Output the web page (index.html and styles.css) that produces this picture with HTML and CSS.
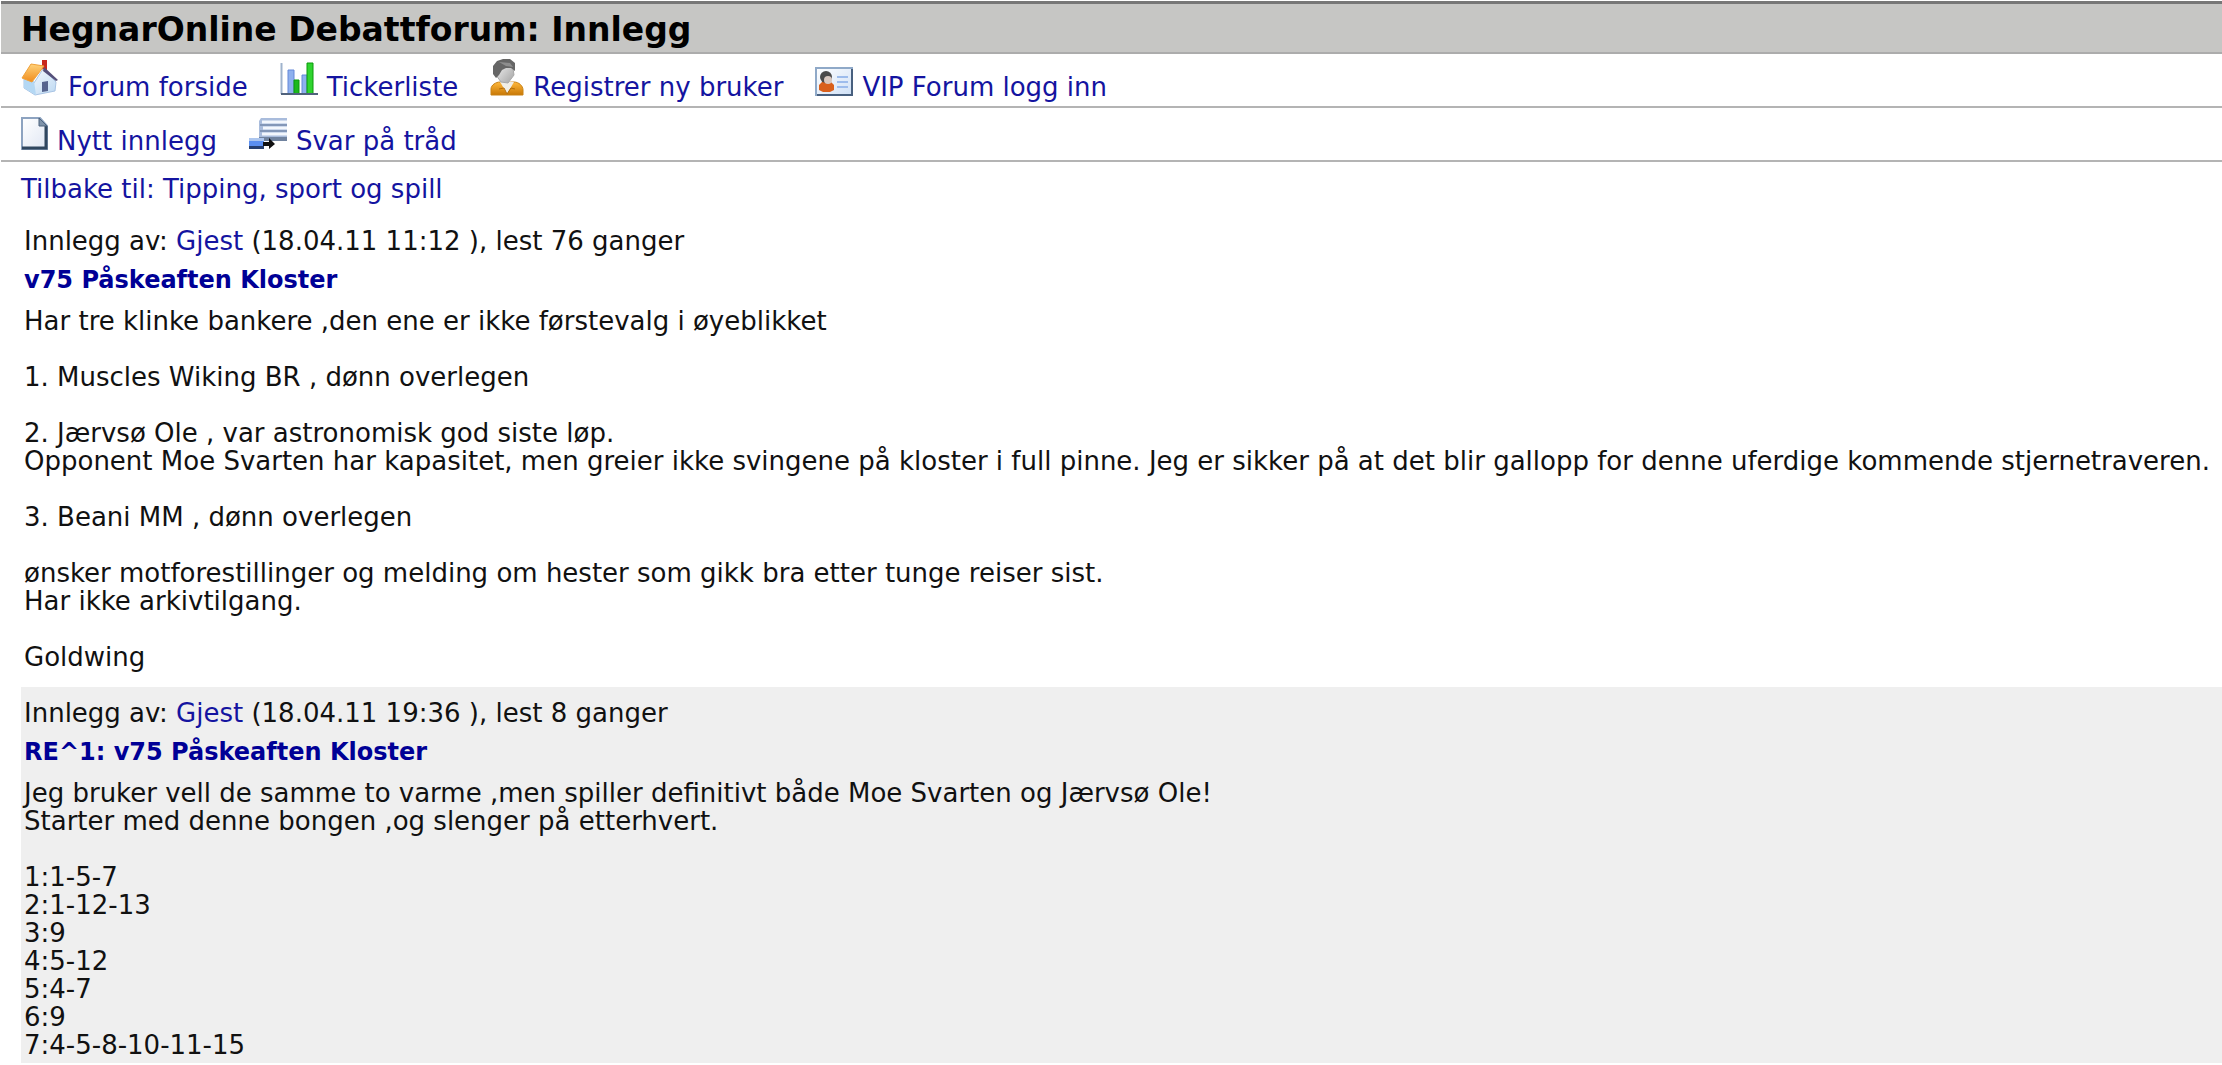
FILE: index.html
```html
<!DOCTYPE html>
<html lang="no">
<head>
    <meta charset="UTF-8">
    <title>HegnarOnline Debattforum: Innlegg</title>
    <link rel="stylesheet" href="styles.css">
</head>
<body>
    <div class="header">
        <h1>HegnarOnline Debattforum: Innlegg</h1>
    </div>
    <div class="toolbar">
        <a href="#" class="tool">
            <svg width="38" height="37" viewBox="0 0 38 37">
                <defs>
                    <linearGradient id="roof" x1="0" y1="0" x2="0" y2="1">
                        <stop offset="0" stop-color="#ffd27a"/>
                        <stop offset="1" stop-color="#f08c1c"/>
                    </linearGradient>
                    <linearGradient id="wall" x1="0" y1="0" x2="1" y2="1">
                        <stop offset="0" stop-color="#ffffff"/>
                        <stop offset="1" stop-color="#bcd8f2"/>
                    </linearGradient>
                </defs>
                <path d="M21 1h5v13h-5z" fill="#c8281c"/>
                <path d="M3 20l10 4 9-14 13 13-1 9-20 4L3 29z" fill="url(#wall)" stroke="#a9c4e4"/>
                <path d="M3 20l10 2 2 14-12-7z" fill="#b4d8f4"/>
                <path d="M21 23l6-1v10l-6 1z" fill="#56648e"/>
                <path d="M23 8l14 13-2 1-13-10z" fill="#55507a"/>
                <path d="M10 5l13 2L11 23 1 19z" fill="url(#roof)" stroke="#f0a038"/>
            </svg>
            <span>Forum forside</span>
        </a>
        <a href="#" class="tool">
            <svg width="38" height="34" viewBox="0 0 38 34">
                <path d="M1.500 1v31" stroke="#9fb3cc" stroke-width="2"/>
                <path d="M8 8h6v24H8zM22 13h5v19h-5z" fill="#8eb0ee" stroke="#6488d8"/>
                <path d="M14 18h5v14h-5z" fill="#1cb81c" stroke="#0a9a0a"/>
                <path d="M27 1h6v31h-6z" fill="#2fd42f" stroke="#0a9a0a"/>
                <path d="M1 32h37" stroke="#50627c" stroke-width="2"/>
            </svg>
            <span>Tickerliste</span>
        </a>
        <a href="#" class="tool">
            <svg width="34" height="37" viewBox="0 0 34 37">
                <defs>
                    <linearGradient id="coat" x1="0" y1="0" x2="0" y2="1">
                        <stop offset="0" stop-color="#ffb83c"/>
                        <stop offset="1" stop-color="#c87806"/>
                    </linearGradient>
                    <linearGradient id="face" x1="0" y1="0" x2="1" y2="1">
                        <stop offset="0" stop-color="#f6f6f6"/>
                        <stop offset="1" stop-color="#a2a2a2"/>
                    </linearGradient>
                </defs>
                <path d="M1 36v-6c0-4 5-7 9-7h14c5 0 9 4 9 8v5z" fill="url(#coat)" stroke="#c98214"/>
                <path d="M9 21l8 14 7-12z" fill="#f1eee6"/>
                <path d="M17 35l-3-6-5 1M17 35l4-6 4 1" fill="none" stroke="#b36c08"/>
                <path d="M6 10L22 3l2 13-6 8-7-1-5-7z" fill="url(#face)" stroke="#a8a8a8"/>
                <path d="M3 7l4-5 6-2h7l5 4v8l-4-3h-5l-4 2-3 5-3 3-3-4z" fill="#666"/>
                <path d="M9 3l11 1 3 4-7-1z" fill="#8e8e8e"/>
            </svg>
            <span>Registrer ny bruker</span>
        </a>
        <a href="#" class="tool">
            <svg width="38" height="29" viewBox="0 0 38 29">
                <defs>
                    <linearGradient id="card" x1="0" y1="0" x2="1" y2="1">
                        <stop offset="0" stop-color="#ffffff"/>
                        <stop offset="1" stop-color="#cfe0f6"/>
                    </linearGradient>
                </defs>
                <path d="M1 1h36v27H1z" fill="url(#card)" stroke="#8fa9c8" stroke-width="2"/>
                <path d="M37 2v26H2" fill="none" stroke="#48607f" stroke-width="2"/>
                <path d="M4 23v-5l4-4h7l4 4v5l-4 2H8z" fill="#d9601c"/>
                <circle cx="11" cy="10" r="6" fill="#4a4a4a"/>
                <circle cx="13" cy="13" r="4" fill="#d8c8c0"/>
                <path d="M22 10h11M22 15h11M22 20h11" stroke="#9dbcec" stroke-width="2"/>
            </svg>
            <span>VIP Forum logg inn</span>
        </a>
    </div>
    <div class="toolbar">
        <a href="#" class="tool">
            <svg width="27" height="33" viewBox="0 0 27 33">
                <defs>
                    <linearGradient id="sheet" x1="0" y1="0" x2="1" y2="1">
                        <stop offset="0" stop-color="#ffffff"/>
                        <stop offset="1" stop-color="#dfe6f3"/>
                    </linearGradient>
                </defs>
                <path d="M1 1h18l7 8v23H1z" fill="url(#sheet)" stroke="#8da3c0" stroke-width="2"/>
                <path d="M25 9v22H1" fill="none" stroke="#30475f" stroke-width="3"/>
                <path d="M18 1v8h8z" fill="#7f93aa" stroke="#4d637c"/>
            </svg>
            <span>Nytt innlegg</span>
        </a>
        <a href="#" class="tool">
            <svg width="38" height="32" viewBox="0 0 38 32">
                <path d="M12 0h26v23H10V3z" fill="#a9bcdc"/>
                <path d="M13 4h25M14 10h24M13 16h25" stroke="#f3f7fd" stroke-width="3"/>
                <path d="M11 7h27M11 13h27" stroke="#8397b8" stroke-width="2"/>
                <path d="M10 19h28v4H10z" fill="#70839f"/>
                <path d="M0 20h15v11H0z" fill="#5b8ff0"/>
                <path d="M0 20h15v3H0z" fill="#adc6ee"/>
                <path d="M0 28h15v3H0z" fill="#263f70"/>
                <path d="M14 24h6v-4l6 6-6 5v-3h-6z" fill="#111"/>
            </svg>
            <span>Svar på tråd</span>
        </a>
    </div>
    <div class="content">
        <a href="#" class="back">Tilbake til: Tipping, sport og spill</a>
        <div class="post">
            <p class="meta">Innlegg av: <a href="#">Gjest</a> (18.04.11 11:12 ), lest 76 ganger</p>
            <h2><a href="#">v75 Påskeaften Kloster</a></h2>
            <p class="text">
                Har tre klinke bankere ,den ene er ikke førstevalg i øyeblikket<br>
                <br>
                1. Muscles Wiking BR , dønn overlegen<br>
                <br>
                2. Jærvsø Ole , var astronomisk god siste løp.<br>
                Opponent Moe Svarten har kapasitet, men greier ikke svingene på kloster i full pinne. Jeg er sikker på at det blir gallopp for denne uferdige kommende stjernetraveren.<br>
                <br>
                3. Beani MM , dønn overlegen<br>
                <br>
                ønsker motforestillinger og melding om hester som gikk bra etter tunge reiser sist.<br>
                Har ikke arkivtilgang.<br>
                <br>
                Goldwing
            </p>
        </div>
        <div class="post reply">
            <p class="meta">Innlegg av: <a href="#">Gjest</a> (18.04.11 19:36 ), lest 8 ganger</p>
            <h2><a href="#">RE^1: v75 Påskeaften Kloster</a></h2>
            <p class="text">
                Jeg bruker vell de samme to varme ,men spiller definitivt både Moe Svarten og Jærvsø Ole!<br>
                Starter med denne bongen ,og slenger på etterhvert.<br>
                <br>
                1:1-5-7<br>
                2:1-12-13<br>
                3:9<br>
                4:5-12<br>
                5:4-7<br>
                6:9<br>
                7:4-5-8-10-11-15
            </p>
        </div>
    </div>
</body>
</html>
```
FILE: styles.css
```css
body {
    font-family: Verdana, "DejaVu Sans", sans-serif;
    font-size: 26px;
    line-height: 28px;
    margin: 0;
    padding: 1px 0 0 1px;
    background-color: #fff;
    color: #111;
}
a {
    color: #1414a0;
    text-decoration: none;
}
h1, h2, p {
    margin: 0;
}
.header {
    background-color: #c6c6c4;
    border-top: 3px solid #777;
    border-bottom: 2px solid #acacac;
    padding: 6px 20px 2px;
}
.header h1 {
    font-size: 33px;
    line-height: 40px;
    color: #000;
}
.toolbar {
    display: flex;
    gap: 32px;
    padding: 5px 20px;
    border-bottom: 2px solid #b4b4b4;
    min-height: 42px;
    align-items: flex-end;
}
.tool {
    display: flex;
    align-items: baseline;
    gap: 9px;
}
.content {
    padding-left: 20px;
}
.back {
    display: block;
    padding: 13px 0 12px;
}
.post {
    padding: 12px 3px 16px;
}
.post h2 {
    font-size: 24px;
    line-height: 28px;
    padding: 11px 0 13px;
}
.post h2 a {
    color: #000096;
}
.reply {
    background-color: #efefef;
    padding-bottom: 4px;
}
```
